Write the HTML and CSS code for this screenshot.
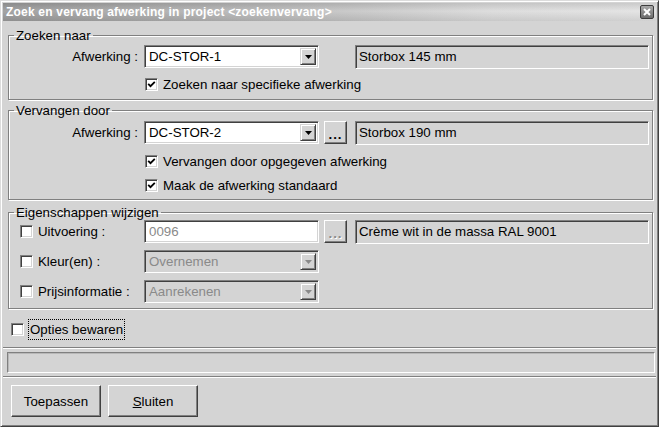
FILE: index.html
```html
<!DOCTYPE html>
<html lang="nl">
<head>
    <meta charset="UTF-8">
    <title>Zoek en vervang afwerking</title>
    <link rel="stylesheet" href="styles.css">
</head>
<body>
    <div class="window">
        <div class="titlebar">
            <span class="title">Zoek en vervang afwerking in project &lt;zoekenvervang&gt;</span>
            <span class="close-btn">
                <svg width="8" height="8" viewBox="0 0 8 8"><path d="M1 1 L7 7 M7 1 L1 7" stroke="#fff" stroke-width="2"/></svg>
            </span>
        </div>

        <fieldset class="group group-search">
            <legend>Zoeken naar</legend>
            <div class="field-row">
                <span class="field-label">Afwerking :</span>
                <div class="combo">
                    <span class="combo-text">DC-STOR-1</span>
                    <span class="combo-btn"><svg width="7" height="4" viewBox="0 0 7 4"><path d="M0 0 H7 L3.5 4 Z" fill="#000"/></svg></span>
                </div>
                <span class="dots-space"></span>
                <div class="desc">Storbox 145 mm</div>
            </div>
            <div class="check-row indent first">
                <span class="cb"><svg width="9" height="9" viewBox="0 0 9 9"><path d="M1.2 3.8 L3.5 6.2 L7.8 1.8" fill="none" stroke="#000" stroke-width="1.8"/></svg></span>
                <span>Zoeken naar specifieke afwerking</span>
            </div>
        </fieldset>

        <fieldset class="group group-replace">
            <legend>Vervangen door</legend>
            <div class="field-row">
                <span class="field-label">Afwerking :</span>
                <div class="combo">
                    <span class="combo-text">DC-STOR-2</span>
                    <span class="combo-btn"><svg width="7" height="4" viewBox="0 0 7 4"><path d="M0 0 H7 L3.5 4 Z" fill="#000"/></svg></span>
                </div>
                <span class="dots-btn">...</span>
                <div class="desc">Storbox 190 mm</div>
            </div>
            <div class="check-row indent first">
                <span class="cb"><svg width="9" height="9" viewBox="0 0 9 9"><path d="M1.2 3.8 L3.5 6.2 L7.8 1.8" fill="none" stroke="#000" stroke-width="1.8"/></svg></span>
                <span>Vervangen door opgegeven afwerking</span>
            </div>
            <div class="check-row indent second">
                <span class="cb"><svg width="9" height="9" viewBox="0 0 9 9"><path d="M1.2 3.8 L3.5 6.2 L7.8 1.8" fill="none" stroke="#000" stroke-width="1.8"/></svg></span>
                <span>Maak de afwerking standaard</span>
            </div>
        </fieldset>

        <fieldset class="group group-props">
            <legend>Eigenschappen wijzigen</legend>
            <div class="field-row">
                <span class="prop-label"><span class="cb"></span>Uitvoering :</span>
                <div class="combo disabled no-arrow">
                    <span class="combo-text">0096</span>
                </div>
                <span class="dots-btn disabled">...</span>
                <div class="desc">Crème wit in de massa RAL 9001</div>
            </div>
            <div class="field-row">
                <span class="prop-label"><span class="cb"></span>Kleur(en) :</span>
                <div class="combo disabled">
                    <span class="combo-text">Overnemen</span>
                    <span class="combo-btn"><svg width="7" height="4" viewBox="0 0 7 4"><path d="M0 0 H7 L3.5 4 Z" fill="#8a8a8a"/></svg></span>
                </div>
            </div>
            <div class="field-row">
                <span class="prop-label"><span class="cb"></span>Prijsinformatie :</span>
                <div class="combo disabled">
                    <span class="combo-text">Aanrekenen</span>
                    <span class="combo-btn"><svg width="7" height="4" viewBox="0 0 7 4"><path d="M0 0 H7 L3.5 4 Z" fill="#8a8a8a"/></svg></span>
                </div>
            </div>
        </fieldset>

        <div class="options-row">
            <span class="cb"></span>
            <span class="focus-text">Opties bewaren</span>
        </div>

        <div class="separator"></div>
        <div class="status-field"></div>
        <div class="separator lower"></div>

        <div class="button-bar">
            <button class="win-btn">Toepassen</button>
            <button class="win-btn"><u>S</u>luiten</button>
        </div>
    </div>
</body>
</html>
```

FILE: styles.css
```css
* {
    box-sizing: border-box;
}
body {
    margin: 0;
    background: #d4d4d4;
    font-family: "Liberation Sans", Arial, sans-serif;
    font-size: 13.3px;
    color: #000;
}
.window {
    width: 659px;
    height: 427px;
    display: flex;
    flex-direction: column;
    padding: 2px;
    border: 1px solid;
    border-color: #dcdcdc #404040 #404040 #dcdcdc;
    box-shadow: inset 1px 1px 0 #fff, inset -1px -1px 0 #808080;
    background: #d4d4d4;
    overflow: hidden;
}
.titlebar {
    height: 18px;
    flex: none;
    display: flex;
    align-items: center;
    justify-content: space-between;
    padding: 0 1px 0 3px;
    background:
        linear-gradient(to bottom, rgba(0,0,0,0.10), rgba(255,255,255,0.10) 45%, rgba(0,0,0,0.08)),
        linear-gradient(to right, #9a9a9a, #bdbdbd 45%, #dadada 75%, #e2e2e2);
}
.title {
    color: #fff;
    font-weight: bold;
    font-size: 12px;
    letter-spacing: 0.2px;
    white-space: nowrap;
}
.close-btn {
    width: 14px;
    height: 14px;
    margin-right: 1px;
    display: flex;
    align-items: center;
    justify-content: center;
    border: 1px solid #3c3c3c;
    border-radius: 2px;
    background: linear-gradient(to bottom, #a8a8a8, #6c6c6c);
}

/* group boxes */
.group {
    margin: 0 3px 0 5px;
    padding: 0 2px 5px 0;
    border: 1px solid #808080;
    box-shadow: 1px 1px 0 #fff, inset 1px 1px 0 #fff;
    min-inline-size: 0;
}
.group legend {
    margin-left: 5px;
    padding: 0 2px;
    line-height: 15px;
}
.group-search {
    margin-top: 7px;
    padding-top: 2px;
}
.group-replace {
    margin-top: 3px;
    padding-top: 3px;
    padding-bottom: 4px;
}
.group-props {
    margin-top: 5px;
    padding-top: 0;
}

.field-row {
    display: flex;
    align-items: center;
    height: 23px;
}
.group-props .field-row + .field-row {
    margin-top: 7px;
}
.field-label {
    width: 135px;
    padding-right: 6px;
    text-align: right;
    flex: none;
}
.prop-label {
    width: 135px;
    padding-left: 11px;
    flex: none;
    display: flex;
    align-items: center;
    gap: 5px;
}

.combo {
    width: 175px;
    height: 23px;
    flex: none;
    display: flex;
    align-items: center;
    justify-content: space-between;
    background: #fff;
    border: 1px solid;
    border-color: #808080 #fff #fff #808080;
    box-shadow: inset 1px 1px 0 #404040, inset -1px -1px 0 #d4d4d4;
    padding: 2px;
}
.combo-text {
    padding-left: 2px;
}
.combo-btn {
    width: 16px;
    height: 17px;
    display: flex;
    align-items: center;
    justify-content: center;
    background: #d4d4d4;
    border: 1px solid;
    border-color: #d4d4d4 #404040 #404040 #d4d4d4;
    box-shadow: inset 1px 1px 0 #fff, inset -1px -1px 0 #808080;
}
.combo.disabled {
    color: #8a8a8a;
}
.combo.disabled:not(.no-arrow) {
    background: #d4d4d4;
}

.dots-space {
    width: 23px;
    margin-left: 5px;
    flex: none;
}
.dots-btn {
    width: 23px;
    height: 23px;
    margin-left: 5px;
    flex: none;
    display: flex;
    align-items: flex-end;
    justify-content: center;
    padding-bottom: 3px;
    font-weight: bold;
    line-height: 10px;
    letter-spacing: 1px;
    border: 1px solid;
    border-color: #fff #404040 #404040 #fff;
    box-shadow: inset -1px -1px 0 #808080;
}
.dots-btn.disabled {
    color: #8a8a8a;
    text-shadow: 1px 1px 0 #fff;
}
.desc {
    width: 294px;
    height: 24px;
    margin-left: 8px;
    flex: none;
    display: flex;
    align-items: center;
    padding-left: 3px;
    border: 1px solid;
    border-color: #808080 #fff #fff #808080;
    box-shadow: inset 1px 1px 0 #404040, inset -1px -1px 0 #d4d4d4;
}

/* checkboxes */
.cb {
    width: 13px;
    height: 13px;
    flex: none;
    display: inline-flex;
    align-items: center;
    justify-content: center;
    background: #fff;
    border: 1px solid;
    border-color: #808080 #fff #fff #808080;
    box-shadow: inset 1px 1px 0 #404040, inset -1px -1px 0 #d4d4d4;
}
.check-row {
    display: flex;
    align-items: center;
    gap: 5px;
    height: 20px;
}
.check-row.indent {
    padding-left: 136px;
}
.group-search .check-row.first {
    margin-top: 6px;
}
.group-replace .check-row.first {
    margin-top: 7px;
}
.group-replace .check-row.second {
    margin-top: 4px;
}

.options-row {
    height: 21px;
    margin-top: 10px;
    padding-left: 8px;
    display: flex;
    align-items: center;
    gap: 4px;
}
.focus-text {
    border: 1px dotted #000;
    padding: 2px 1px;
}

.separator {
    height: 2px;
    margin-top: 7px;
    border-top: 1px solid #808080;
    border-bottom: 1px solid #fff;
}
.separator.lower {
    margin-top: 3px;
}
.status-field {
    height: 21px;
    margin: 3px 1px 0 4px;
    border: 1px solid;
    border-color: #808080 #fff #fff #808080;
    box-shadow: inset 1px 1px 0 #b8b8b8;
}

.button-bar {
    display: flex;
    gap: 7px;
    margin-top: 7px;
    padding-left: 8px;
}
.win-btn {
    width: 90px;
    height: 32px;
    font-family: "Liberation Sans", Arial, sans-serif;
    font-size: 13.3px;
    color: #000;
    background: #d4d4d4;
    border: 1px solid;
    border-color: #fff #404040 #404040 #fff;
    box-shadow: inset -1px -1px 0 #808080;
    padding: 0;
}
```
